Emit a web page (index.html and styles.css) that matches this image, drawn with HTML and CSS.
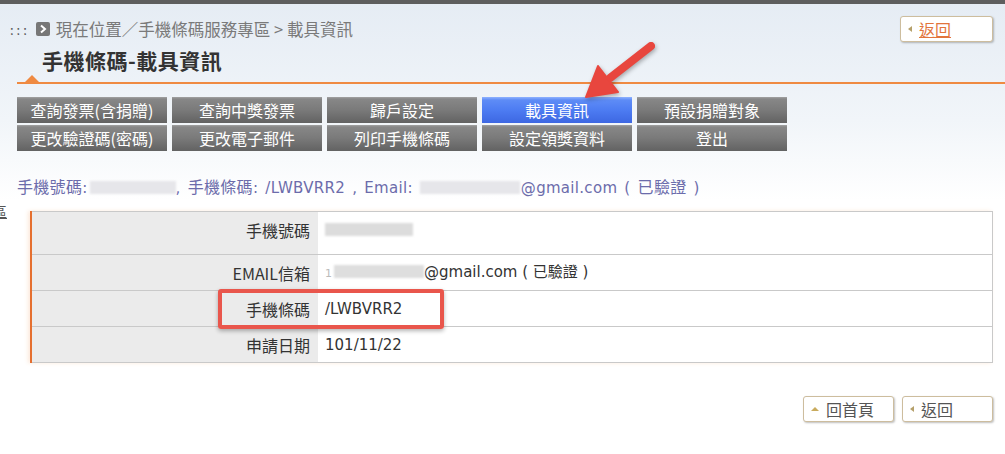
FILE: index.html
```html
<!DOCTYPE html>
<html lang="zh-Hant">
<head>
    <meta charset="UTF-8">
    <title>手機條碼-載具資訊</title>
    <link rel="stylesheet" href="styles.css">
</head>
<body>
    <div class="topbar"></div>
    <div class="page">
        <div class="head">
            <div class="crumb">
                <span class="dots">:::</span>
                <span class="crumb-icon"><svg width="14" height="14" viewBox="0 0 14 14"><path d="M5 3.5 L9 7 L5 10.5" fill="none" stroke="#fff" stroke-width="2"/></svg></span>
                現在位置／手機條碼服務專區 &gt; 載具資訊
            </div>
            <a class="back-btn top-back" href="#"><span class="tri tri-left"></span><span class="link">返回</span></a>
        </div>
        <h1 class="title">手機條碼-載具資訊</h1>
        <div class="rule"></div>

        <div class="nav">
            <a class="nav-btn" href="#">查詢發票(含捐贈)</a>
            <a class="nav-btn" href="#">查詢中獎發票</a>
            <a class="nav-btn" href="#">歸戶設定</a>
            <a class="nav-btn active" href="#">載具資訊</a>
            <a class="nav-btn" href="#">預設捐贈對象</a>
            <a class="nav-btn" href="#">更改驗證碼(密碼)</a>
            <a class="nav-btn" href="#">更改電子郵件</a>
            <a class="nav-btn" href="#">列印手機條碼</a>
            <a class="nav-btn" href="#">設定領獎資料</a>
            <a class="nav-btn" href="#">登出</a>
        </div>

        <p class="info"><span class="cjk">手機號碼</span>:<span class="blur w-phone"></span>, <span class="cjk">手機條碼</span>: /LWBVRR2 , Email: <span class="blur w-mail"></span>@gmail.com ( <span class="cjk">已驗證</span> )</p>

        <div class="table-wrap">
            <span class="stray">區</span>
            <table class="data-table">
                <tr class="first">
                    <th>手機號碼</th>
                    <td><span class="blur w-val"></span></td>
                </tr>
                <tr>
                    <th>EMAIL信箱</th>
                    <td><span class="faint">1</span><span class="blur w-val2"></span>@gmail.com ( 已驗證 )</td>
                </tr>
                <tr>
                    <th>手機條碼</th>
                    <td>/LWBVRR2</td>
                </tr>
                <tr>
                    <th>申請日期</th>
                    <td>101/11/22</td>
                </tr>
            </table>
        </div>

        <div class="foot">
            <a class="back-btn" href="#"><span class="tri tri-up"></span>回首頁</a>
            <a class="back-btn" href="#"><span class="tri tri-left"></span>返回</a>
        </div>
    </div>

    <!-- 標示用 -->
    <div class="mark-box"></div>
    <svg class="mark-arrow" width="1005" height="130" viewBox="0 0 1005 130">
        <line x1="651" y1="46" x2="610" y2="78" stroke="#e8463e" stroke-width="8" stroke-linecap="round"/>
        <polygon points="586,97 598,66 618,92" fill="#e8463e" stroke="#e8463e" stroke-width="2" stroke-linejoin="round"/>
    </svg>
</body>
</html>
```

FILE: styles.css
```css
body {
    margin: 0;
    position: relative;
    background: #fff linear-gradient(#e5ecf4 0, #f1f5f9 120px, #fff 200px) no-repeat;
    font-family: "DejaVu Sans", "Noto Sans CJK TC", sans-serif;
    font-size: 15px;
    color: #333;
}

.topbar {
    height: 4px;
    background-color: #5e5e5e;
}

.page {
    padding: 12px 12px 30px 17px;
}

.head {
    display: flex;
    justify-content: space-between;
    align-items: center;
    height: 26px;
}

.crumb {
    display: flex;
    align-items: center;
    margin-left: -7px;
    font-family: "Noto Sans CJK TC", sans-serif;
    font-size: 16.5px;
    color: #7a7a7a;
}

.dots {
    color: #555;
    font-size: 13px;
    letter-spacing: 3px;
    margin-right: 6px;
}

.crumb-icon {
    display: inline-flex;
    width: 14px;
    height: 14px;
    margin-right: 6px;
    border-radius: 2px;
    background-color: #777;
}

.back-btn {
    display: inline-flex;
    align-items: center;
    box-sizing: border-box;
    width: 91px;
    height: 26px;
    padding-left: 7px;
    background-color: #fff;
    border: 1px solid #cdbd9e;
    border-radius: 3px;
    box-shadow: 1px 1px 2px rgba(0, 0, 0, 0.25);
    font-family: "Noto Sans CJK TC", sans-serif;
    font-size: 16px;
    color: #555;
    text-decoration: none;
}

.top-back {
    width: 93px;
}

.top-back .link {
    color: #e2743c;
    text-decoration: underline;
}

.tri {
    display: inline-block;
    width: 0;
    height: 0;
    margin-right: 7px;
}
.tri-left {
    border-top: 3px solid transparent;
    border-bottom: 3px solid transparent;
    border-right: 4px solid #b5a06a;
}
.tri-up {
    border-left: 4px solid transparent;
    border-right: 4px solid transparent;
    border-bottom: 4px solid #c9ab5e;
}

.title {
    margin: 5px 0 0 25px;
    font-family: "Noto Sans CJK TC", sans-serif;
    font-size: 21px;
    letter-spacing: 0.5px;
    line-height: 26px;
    font-weight: bold;
    color: #333;
}

.rule {
    position: relative;
    height: 2px;
    margin: 9px -12px 0 0;
    background-color: #ef8a42;
}
.rule::before {
    content: "";
    position: absolute;
    left: 8px;
    bottom: 2px;
    border-left: 7px solid transparent;
    border-right: 7px solid transparent;
    border-bottom: 7px solid #ef8a42;
}

.nav {
    display: grid;
    grid-template-columns: repeat(5, 150px);
    column-gap: 5px;
    row-gap: 2px;
    margin-top: 13px;
}

.nav-btn {
    display: block;
    height: 26px;
    line-height: 26px;
    text-align: center;
    font-family: "Noto Sans CJK TC", sans-serif;
    font-size: 16px;
    color: #fff;
    text-decoration: none;
    background: linear-gradient(#a3a3a3 0, #878787 2px, #7a7a7a 50%, #626262 100%);
}

.nav-btn.active {
    background: linear-gradient(#8fb2ff 0, #5e8cf6 3px, #4d7cf2 50%, #3d67e2 100%);
}

.info {
    margin: 25px 0 0 0;
    font-size: 15px;
    line-height: 20px;
    letter-spacing: 0.3px;
    word-spacing: 2px;
    color: #6c6cab;
}

.info .cjk {
    font-family: "Noto Sans CJK TC", sans-serif;
    font-size: 16px;
}

.blur {
    display: inline-block;
    height: 13px;
    vertical-align: -1px;
    background-color: #e6e6ea;
    filter: blur(1px);
}
.w-phone { width: 86px; margin-left: 2px; }
.w-mail { width: 100px; margin-right: 1px; }
.w-val { width: 88px; background-color: #dcdcdc; }
.w-val2 { width: 90px; background-color: #dedede; margin-left: 2px; }

.faint {
    color: #bbb;
    font-size: 11px;
}

.table-wrap {
    position: relative;
    margin: 13px 0 0 13px;
}

.stray {
    position: absolute;
    left: -37px;
    top: -10px;
    font-family: "Noto Sans CJK TC", sans-serif;
    font-size: 14px;
    color: #555;
    text-decoration: underline;
}

.data-table {
    width: 100%;
    border-collapse: collapse;
    border-left: 2px solid #e56f2f;
    box-shadow: -2px 0 4px rgba(240, 150, 80, 0.2);
}

.data-table th,
.data-table td {
    height: 35px;
    padding: 0 8px;
    border-top: 1px solid #c9c9c9;
    border-bottom: 1px solid #c9c9c9;
    line-height: 20px;
    font-size: 15px;
    font-weight: normal;
    color: #333;
}

.data-table td {
    padding-left: 7px;
    border-right: 1px solid #c9c9c9;
    background-color: #fff;
}

.data-table th {
    width: 270px;
    text-align: right;
    background-color: #ebebeb;
    font-family: "Noto Sans CJK TC", sans-serif;
    font-size: 16px;
}

.data-table .first th,
.data-table .first td {
    height: 42px;
    padding-top: 8px;
    padding-bottom: 14px;
    vertical-align: top;
    box-sizing: border-box;
}

.foot {
    display: flex;
    justify-content: flex-end;
    gap: 8px;
    margin-top: 33px;
}

.mark-box {
    position: absolute;
    left: 218px;
    top: 289px;
    width: 226px;
    height: 40px;
    box-sizing: border-box;
    border: 4px solid #e9564c;
    border-radius: 3px;
    box-shadow: 0 2px 4px rgba(0, 0, 0, 0.3);
}

.mark-arrow {
    position: absolute;
    left: 0;
    top: 0;
    filter: drop-shadow(1px 2px 2px rgba(0, 0, 0, 0.3));
}
```
